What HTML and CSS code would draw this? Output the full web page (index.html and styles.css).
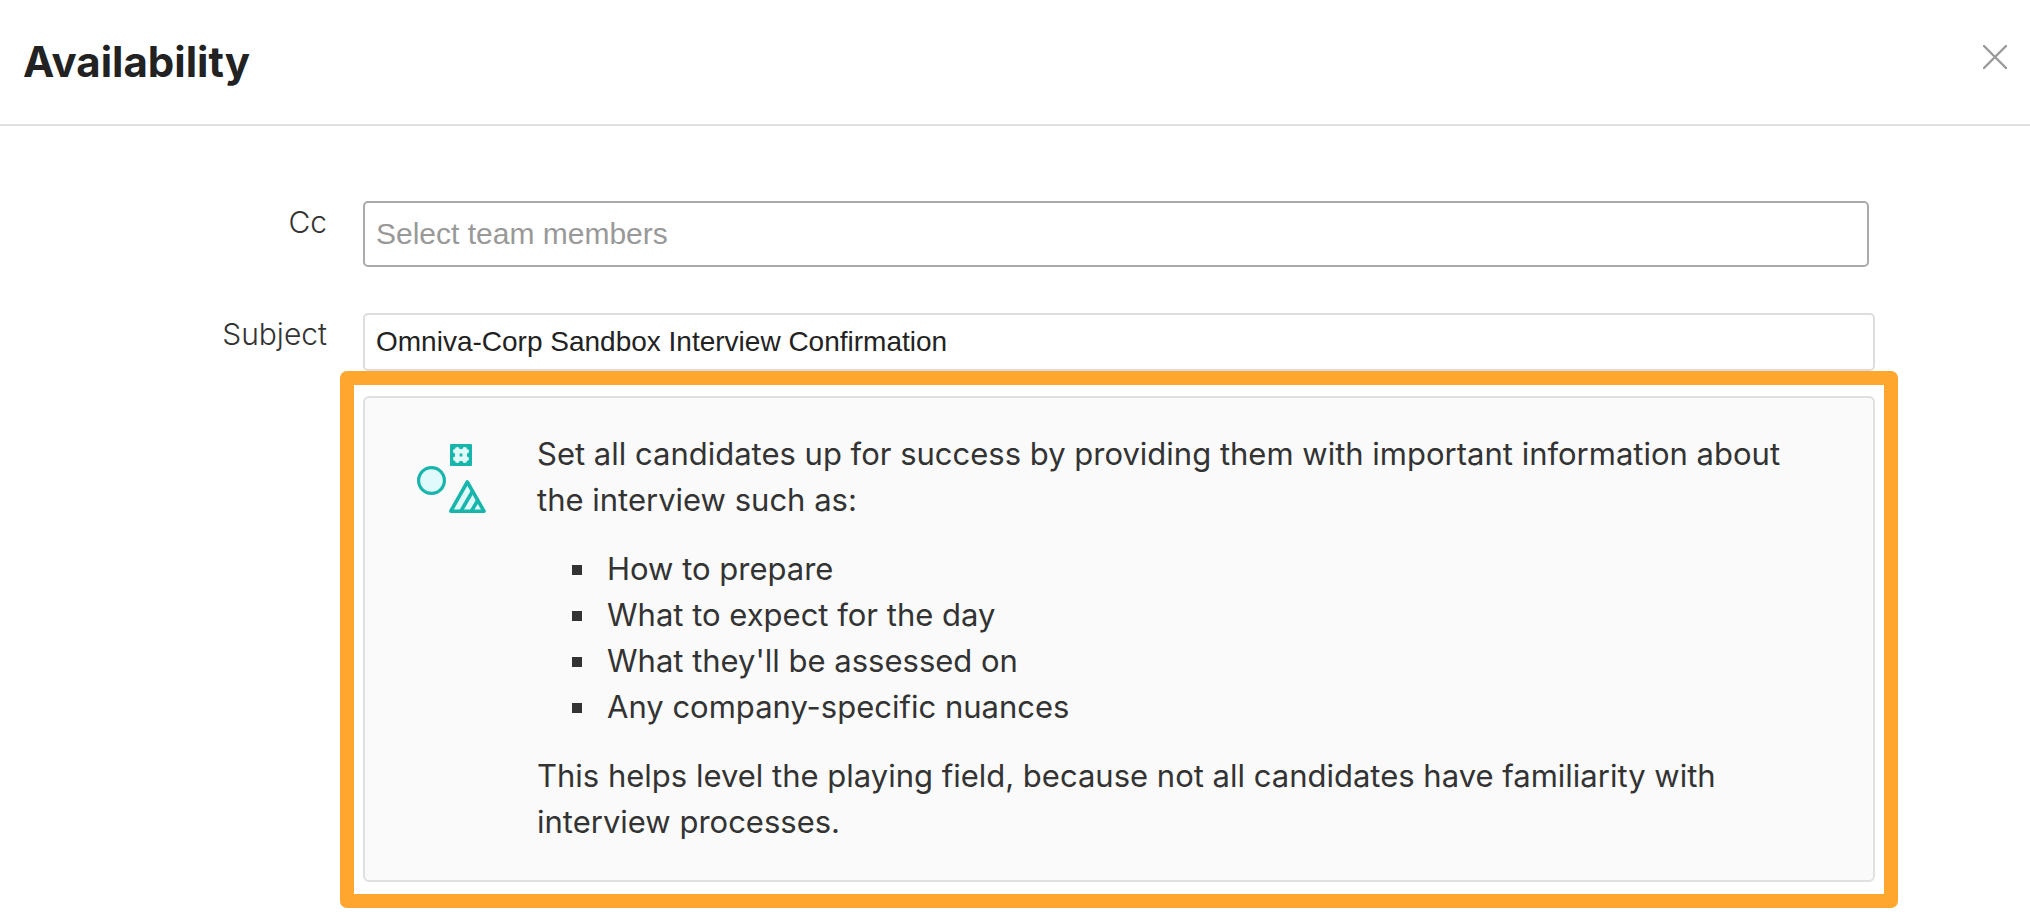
FILE: index.html
```html
<!DOCTYPE html>
<html lang="en">
<head>
    <meta charset="UTF-8">
    <meta name="viewport" content="width=device-width, initial-scale=1.0">
    <title>Availability</title>
    <link rel="stylesheet" href="styles.css">
</head>
<body>

    <header class="modal-header">
        <h1>Availability</h1>
        <button type="button" class="close" aria-label="Close">
            <svg width="24" height="24" viewBox="0 0 24 24" fill="none" stroke="#999" stroke-width="2.4" stroke-linecap="round">
                <path d="M1 1L23 23M23 1L1 23"/>
            </svg>
        </button>
    </header>

    <form class="email-form">
        <label for="cc">Cc</label>
        <input type="text" id="cc" class="cc-input" placeholder="Select team members">

        <label for="subject">Subject</label>
        <div class="field">
            <input type="text" id="subject" class="subject-input" value="Omniva-Corp Sandbox Interview Confirmation">

            <div class="highlight">
                <section class="tip">
                    <svg class="tip-icon" width="70" height="71" viewBox="0 0 70 71" fill="#dffaf8" stroke="#18b5ac" stroke-width="3.2" stroke-linejoin="round">
                        <rect x="34" y="1" width="22" height="22" rx="1" fill="#18b5ac" stroke="none"/>
                        <path d="M41.3 6.3V17.7M48.7 6.3V17.7M39.3 8.3H50.7M39.3 15.7H50.7" stroke="#dffaf8" stroke-width="4.6" stroke-linecap="round"/>
                        <circle cx="15.5" cy="37.5" r="12.9"/>
                        <path d="M51.3 39L68 68.2H34.8Z" stroke-width="3.6"/>
                        <path d="M45 68L57 47.5M55.5 68L62 57" fill="none" stroke-width="3.6"/>
                    </svg>
                    <div class="tip-text">
                        <p>Set all candidates up for success by providing them with important information about the interview such as:</p>
                        <ul>
                            <li>How to prepare</li>
                            <li>What to expect for the day</li>
                            <li>What they'll be assessed on</li>
                            <li>Any company-specific nuances</li>
                        </ul>
                        <p>This helps level the playing field, because not all candidates have familiarity with interview processes.</p>
                    </div>
                </section>
            </div>
        </div>
    </form>

</body>
</html>
```

FILE: styles.css
```css
* {
    box-sizing: border-box;
}
body {
    font-family: Inter, "Liberation Sans", sans-serif;
    color: #333;
    background-color: #fff;
    margin: 0;
}
.modal-header {
    display: flex;
    justify-content: space-between;
    align-items: flex-start;
    padding: 36px 20px 36px 23px;
    border-bottom: 2px solid #e0e0e0;
}
h1 {
    margin: 0;
    font-size: 42px;
    line-height: 52px;
    font-weight: 700;
    color: #222;
}
.close {
    display: flex;
    margin-top: 6px;
    padding: 3px;
    border: none;
    background: none;
    cursor: pointer;
}
.email-form {
    display: grid;
    grid-template-columns: 327px 1fr;
    column-gap: 36px;
    row-gap: 46px;
    padding: 75px 155px 0 0;
}
label {
    padding-top: 3px;
    font-size: 30px;
    line-height: 36px;
    font-weight: 300;
    text-align: right;
}
input {
    display: block;
    width: 100%;
    padding: 0 11px;
    border: 2px solid #ddd;
    border-radius: 5px;
    font-family: "Liberation Sans", Arial, sans-serif;
    color: #222;
    background-color: #fff;
}
.cc-input {
    width: calc(100% - 6px);
    height: 66px;
    border-color: #aaa;
    font-size: 30px;
}
.cc-input::placeholder {
    color: #999;
}
.subject-input {
    height: 58px;
    font-size: 28px;
}
.highlight {
    margin: 0 -23px;
    padding: 11px 9px 12px;
    border: 14px solid #ffa62f;
    border-radius: 7px;
}
.tip {
    display: flex;
    align-items: flex-start;
    gap: 51px;
    padding: 33px 51px 35px;
    border: 2px solid #e0e0e0;
    border-radius: 6px;
    background-color: #fafafa;
}
.tip-icon {
    flex: none;
    margin-top: 12px;
}
.tip-text {
    font-size: 31px;
    line-height: 46px;
}
.tip-text p {
    margin: 0;
}
.tip-text ul {
    margin: 23px 0;
    padding-left: 62px;
    list-style: square;
}
.tip-text li {
    padding-left: 8px;
}
```
